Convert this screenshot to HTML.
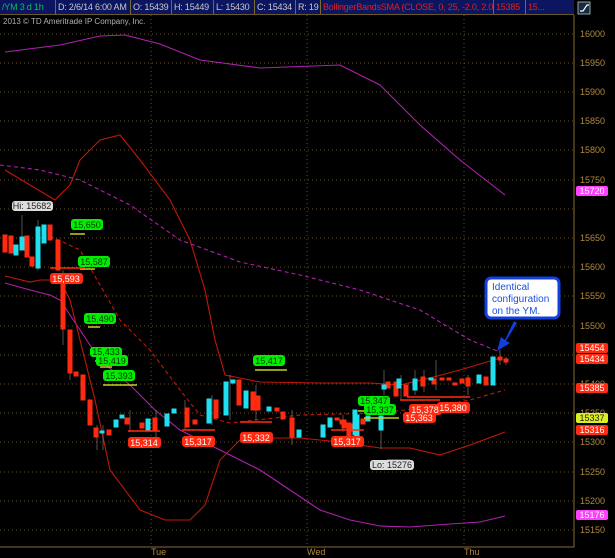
<!DOCTYPE html>
<html><head><meta charset="utf-8"><style>
body{margin:0;background:#000;width:615px;height:558px;overflow:hidden;font-family:"Liberation Sans",sans-serif}
#hdr{position:absolute;left:0;top:0;height:14px;width:574px;background:#0c1560;border-bottom:1px solid #6a5a20}
.c{position:absolute;top:0;height:14px;line-height:14px;font-size:9px;color:#c8c8c8;border-right:1px solid #7a6a30;padding-left:2px;box-sizing:border-box;white-space:nowrap;overflow:hidden;letter-spacing:-0.2px}
</style></head><body>
<div id="hdr">
<div class="c" style="left:0;width:56px;color:#00c060">/YM 3 d 1h</div>
<div class="c" style="left:56px;width:75px">D: 2/6/14 6:00 AM</div>
<div class="c" style="left:131px;width:41px">O: 15439</div>
<div class="c" style="left:172px;width:42px">H: 15449</div>
<div class="c" style="left:214px;width:41px">L: 15430</div>
<div class="c" style="left:255px;width:41px">C: 15434</div>
<div class="c" style="left:296px;width:25px">R: 19</div>
<div class="c" style="left:321px;width:173px;color:#e02020">BollingerBandsSMA (CLOSE, 0, 25, -2.0, 2.0)</div>
<div class="c" style="left:494px;width:32px;color:#e02020">15385</div>
<div class="c" style="left:526px;width:48px;color:#e02020;border-right:none">15...</div>
</div>
<svg width="615" height="558" style="position:absolute;left:0;top:0" font-family="Liberation Sans, sans-serif">
<rect x="578" y="2" width="12" height="12" fill="#1a2a40" stroke="#8aa" stroke-width="1"/>
<path d="M580 11h3l4-6h2" stroke="#fff" fill="none" stroke-width="1.2"/>
<text x="3" y="24" font-size="8" fill="#b0b0b0">2013 © TD Ameritrade IP Company, Inc.</text>
<g stroke="#6a5020" stroke-dasharray="1,3" stroke-width="1">
<path d="M0 34H574M0 63H574M0 92H574M0 121H574M0 150H574M0 180H574M0 209H574M0 238H574M0 267H574M0 296H574M0 326H574M0 355H574M0 384H574M0 413H574M0 442H574M0 472H574M0 501H574M0 530H574"/>
<path d="M151 15V547M307 15V547M464 15V547"/>
</g>
<path d="M574 15V547H0" stroke="#8a6a30" fill="none"/>
<g font-size="9" fill="#b08a40">
<text x="580" y="37">16000</text><text x="580" y="66">15950</text><text x="580" y="95">15900</text><text x="580" y="124">15850</text><text x="580" y="153">15800</text><text x="580" y="183">15750</text><text x="580" y="241">15650</text><text x="580" y="270">15600</text><text x="580" y="299">15550</text><text x="580" y="329">15500</text><text x="580" y="387">15400</text><text x="580" y="416">15350</text><text x="580" y="445">15300</text><text x="580" y="475">15250</text><text x="580" y="504">15200</text><text x="580" y="533">15150</text>
<text x="151" y="555">Tue</text><text x="307" y="555">Wed</text><text x="464" y="555">Thu</text>
</g>
<g fill="none" stroke-width="1.1">
<polyline stroke="#b020b0" points="5,52 60,45 100,36 125,35 160,44 200,60 260,68 340,65 380,85 420,125 460,160 505,195"/>
<polyline stroke="#b020b0" points="5,283 30,290 50,295 60,300 80,330 100,360 130,385 155,410 180,430 210,445 230,455 260,470 290,490 320,510 350,520 380,526 410,527 450,524 480,522 505,516"/>
<polyline stroke="#c01808" points="5,170 30,185 55,200 70,185 80,160 100,140 120,135 140,160 170,200 190,240 205,290 215,340 225,375 260,382 320,383 370,383 400,385 430,378 460,370 500,358"/>
<polyline stroke="#c01808" points="5,276 30,282 40,280 60,280 70,300 80,340 95,400 110,470 140,510 165,520 190,520 205,505 220,460 240,440 270,438 300,438 330,441 360,445 380,448 410,448 440,455 470,445 505,432"/>
<polyline stroke="#c01808" stroke-dasharray="4,3" points="50,236 80,250 120,320 150,350 180,390 200,415 230,423 300,415 380,413 430,407 470,400 505,390"/>
<polyline stroke="#b020b0" stroke-dasharray="4,3" points="0,165 40,170 80,180 130,205 180,240 240,262 300,275 360,290 420,310 470,340 500,352"/>
</g>
<g stroke-width="1">
<path d="M22 215V250M38 220V270M63 270V345M70 370V380M97 425V450M103 425V450M381 400V449M384 370V395M500 350V365M506 357V365M415 370V395M468 375V395M436 360V390M292 410V445M185 400V430M230 375V420M212 395V425M130 410V432M156 410V440M256 385V420M343 415V432M424 370V392M401 375V400" stroke="#888" stroke-width="0.6"/>
<g fill="#ff2a10" stroke="#ff2a10">
<rect x="3" y="235" width="4" height="17"/><rect x="9" y="236" width="4" height="17"/><rect x="25" y="236" width="4" height="21"/><rect x="30" y="257" width="4" height="9"/><rect x="48" y="225" width="4" height="15"/><rect x="56" y="240" width="4" height="30"/><rect x="61" y="280" width="4" height="49"/><rect x="68" y="330" width="4" height="43"/><rect x="74" y="372" width="4" height="4"/><rect x="81" y="375" width="4" height="25"/><rect x="88" y="400" width="4" height="25"/><rect x="94" y="428" width="4" height="9"/><rect x="107" y="430" width="4" height="5"/><rect x="125" y="418" width="4" height="6"/><rect x="140" y="423" width="4" height="5"/><rect x="153" y="418" width="4" height="12"/><rect x="185" y="408" width="4" height="19"/><rect x="193" y="420" width="4" height="4"/><rect x="214" y="400" width="4" height="18"/><rect x="237" y="380" width="4" height="25"/><rect x="251" y="392" width="4" height="18"/><rect x="256" y="396" width="4" height="14"/><rect x="275" y="408" width="4" height="3"/><rect x="281" y="412" width="4" height="7"/><rect x="290" y="418" width="4" height="19"/><rect x="335" y="418" width="4" height="2"/><rect x="340" y="420" width="4" height="4"/><rect x="347" y="423" width="4" height="15"/><rect x="342" y="420" width="4" height="8"/><rect x="349" y="424" width="4" height="7"/><rect x="361" y="419" width="4" height="5"/><rect x="386" y="382" width="4" height="6"/><rect x="394" y="382" width="4" height="14"/><rect x="404" y="385" width="4" height="11"/><rect x="421" y="377" width="4" height="9"/><rect x="432" y="379" width="4" height="5"/><rect x="440" y="378" width="4" height="2"/><rect x="447" y="378" width="4" height="2"/><rect x="453" y="383" width="4" height="2"/><rect x="460" y="379" width="4" height="4"/><rect x="466" y="378" width="4" height="8"/><rect x="484" y="377" width="4" height="8"/><rect x="498" y="357" width="4" height="3"/><rect x="504" y="359" width="4" height="3"/>
</g>
<g fill="#20e0f0" stroke="#20e0f0">
<rect x="14" y="245" width="4" height="10"/><rect x="20" y="237" width="4" height="13"/><rect x="36" y="227" width="4" height="41"/><rect x="42" y="225" width="4" height="18"/><rect x="100" y="431" width="4" height="2"/><rect x="114" y="420" width="4" height="7"/><rect x="120" y="415" width="4" height="3"/><rect x="146" y="419" width="4" height="11"/><rect x="165" y="414" width="4" height="12"/><rect x="172" y="409" width="4" height="4"/><rect x="207" y="399" width="4" height="24"/><rect x="224" y="382" width="4" height="33"/><rect x="231" y="380" width="4" height="3"/><rect x="244" y="391" width="4" height="17"/><rect x="267" y="407" width="4" height="4"/><rect x="297" y="430" width="4" height="7"/><rect x="321" y="425" width="4" height="12"/><rect x="328" y="418" width="4" height="9"/><rect x="355" y="415" width="4" height="22"/><rect x="353" y="410" width="4" height="25"/><rect x="366" y="416" width="4" height="5"/><rect x="379" y="416" width="4" height="14"/><rect x="382" y="385" width="4" height="4"/><rect x="397" y="379" width="4" height="9"/><rect x="413" y="379" width="4" height="11"/><rect x="429" y="378" width="4" height="2"/><rect x="477" y="375" width="4" height="8"/><rect x="491" y="357" width="4" height="28"/>
</g>
</g>
<g stroke-width="1.5">
<path d="M70 234H85M80 269H95M88 327H100M95 361H105M100 367H112M103 385H137M255 370H287M358 411H378M364 418H399" stroke="#c8d020"/>
<path d="M50 268H85M128 431H160M182 430H215M240 422H272M331 430H364M407 397H440M400 400H440M437 397H470M387 460H410" stroke="#ff2a10"/>
</g>
<g font-size="9" text-anchor="middle">
<g fill="#00ee00"><rect x="71" y="219" width="32" height="11" rx="3"/><rect x="78" y="256" width="32" height="11" rx="3"/><rect x="84" y="313" width="32" height="11" rx="3"/><rect x="90" y="347" width="32" height="10" rx="3"/><rect x="96" y="355" width="32" height="11" rx="3"/><rect x="103" y="370" width="32" height="11" rx="3"/><rect x="253" y="355" width="32" height="11" rx="3"/><rect x="358" y="396" width="32" height="10" rx="3"/><rect x="364" y="404" width="32" height="11" rx="3"/></g>
<g fill="#003000"><text x="87" y="228">15,650</text><text x="94" y="265">15,587</text><text x="100" y="322">15,490</text><text x="106" y="355">15,433</text><text x="112" y="364">15,419</text><text x="119" y="379">15,393</text><text x="269" y="364">15,417</text><text x="374" y="404">15,347</text><text x="380" y="413">15,337</text></g>
<g fill="#ff2a10"><rect x="50" y="273" width="33" height="11" rx="3"/><rect x="128" y="437" width="33" height="11" rx="3"/><rect x="182" y="436" width="33" height="11" rx="3"/><rect x="240" y="432" width="33" height="11" rx="3"/><rect x="331" y="436" width="33" height="11" rx="3"/><rect x="409" y="404" width="33" height="11" rx="3"/><rect x="403" y="412" width="33" height="11" rx="3"/><rect x="437" y="402" width="33" height="11" rx="3"/></g>
<g fill="#fff"><text x="66" y="282">15,593</text><text x="144" y="446">15,314</text><text x="198" y="445">15,317</text><text x="256" y="441">15,332</text><text x="347" y="445">15,317</text><text x="425" y="413">15,378</text><text x="419" y="421">15,363</text><text x="453" y="411">15,380</text></g>
<rect x="12" y="201" width="41" height="10" rx="3" fill="#ddd"/><text x="32" y="209" fill="#222">Hi: 15682</text>
<rect x="370" y="460" width="44" height="10" rx="3" fill="#ddd"/><text x="392" y="468" fill="#222">Lo: 15276</text>
</g>
<g font-size="9" text-anchor="middle">
<rect x="576" y="343" width="32" height="10" rx="2" fill="#ff2a10"/><text x="592" y="351" fill="#fff">15454</text>
<rect x="576" y="354" width="32" height="10" rx="2" fill="#ff2a10"/><text x="592" y="362" fill="#fff">15434</text>
<rect x="576" y="383" width="32" height="10" rx="2" fill="#ff2a10"/><text x="592" y="391" fill="#fff">15385</text>
<rect x="576" y="413" width="32" height="10" rx="2" fill="#d8f020"/><text x="592" y="421" fill="#222">15337</text>
<rect x="576" y="425" width="32" height="10" rx="2" fill="#ff2a10"/><text x="592" y="433" fill="#fff">15316</text>
<rect x="576" y="186" width="32" height="10" rx="2" fill="#ff40ff"/><text x="592" y="194" fill="#fff">15720</text>
<rect x="576" y="510" width="32" height="10" rx="2" fill="#ff40ff"/><text x="592" y="518" fill="#fff">15176</text>
</g>
<rect x="486" y="278" width="73" height="40" rx="5" fill="#fff" stroke="#1040e0" stroke-width="3"/>
<g font-size="10" fill="#1a50e0"><text x="492" y="290">Identical</text><text x="492" y="302">configuration</text><text x="492" y="314">on the YM.</text></g>
<path d="M514 321L505 340L501 337L497 351L510 343L506 341L517 323Z" fill="#1040e0"/>
</svg>
</body></html>
